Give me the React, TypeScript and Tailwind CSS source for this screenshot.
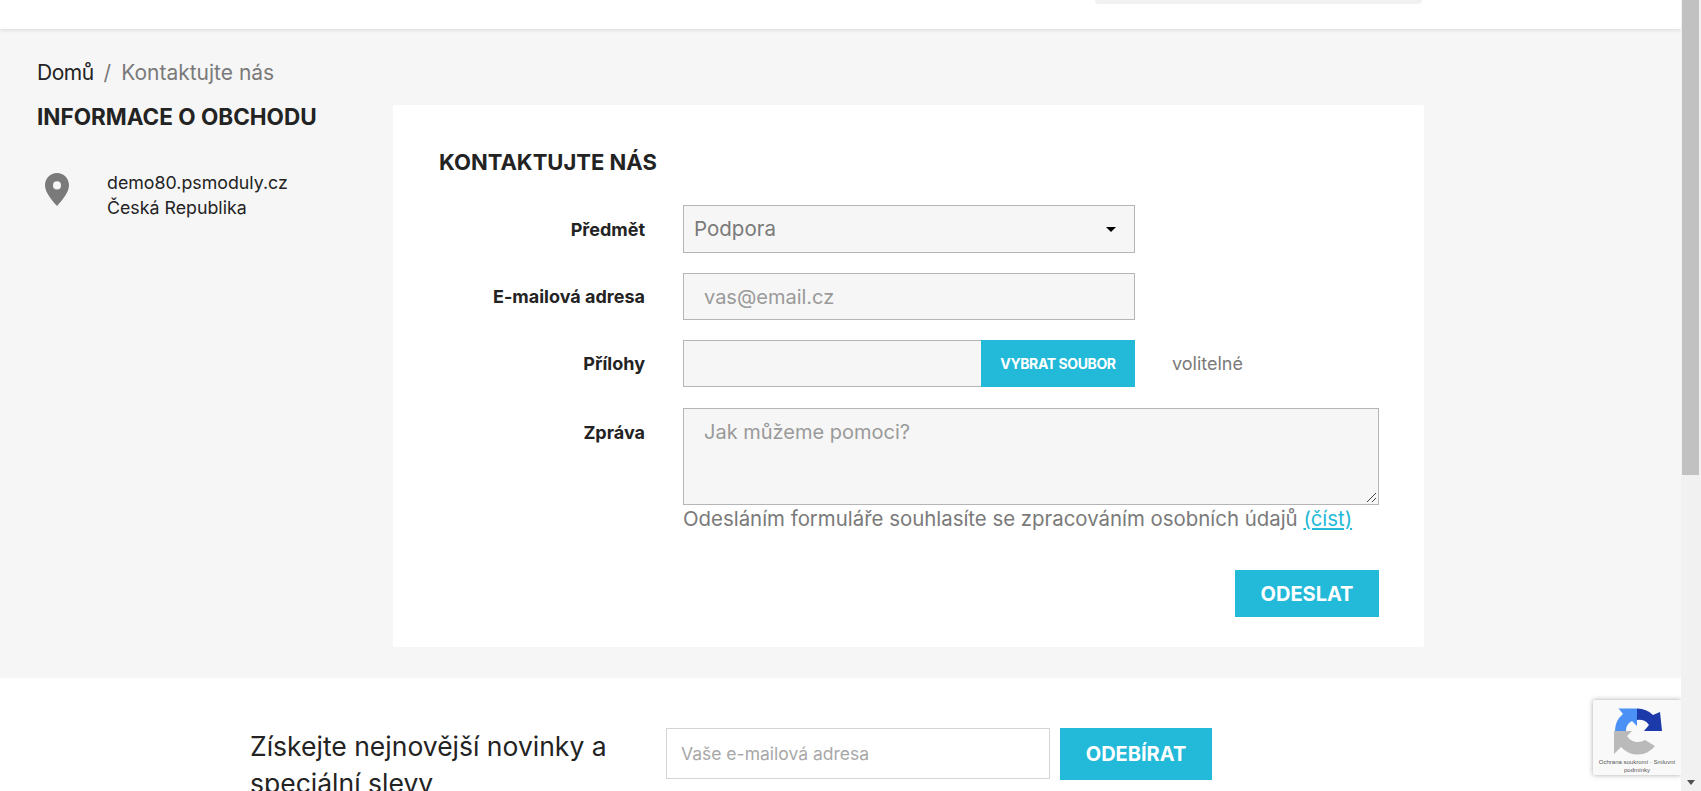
const sans = "font-['Inter',sans-serif]";

function Pin() {
  return (
    <svg width="24" height="33" viewBox="0 0 24 32" preserveAspectRatio="none" className="block">
      <path
        fillRule="evenodd"
        d="M12 0C5.4 0 0 5.200 0 11.800 0 19 7.600 27 12 32c4.400-5 12-13 12-20.200C24 5.200 18.600 0 12 0zm0 8a4 4 0 1 1 0 8 4 4 0 0 1 0-8z"
        fill="#7a7a7a"
      />
    </svg>
  );
}

function Recaptcha() {
  return (
    <div className="absolute left-[1593px] top-[700px] h-[75px] w-[88px] rounded-l-[2px] bg-[#f9f9f9] shadow-[0_0_5px_rgba(0,0,0,0.35)]">
      <svg width="50" height="48" viewBox="0 0 50 48" className="absolute left-[20px] top-[7px]">
        <path d="M2 24 A22 22 0 0 1 10 7 L5.500 1.500 L24 1.500 L24 19 L19 14 A11 11 0 0 0 13 24 Z" fill="#4a90f5" />
        <path d="M24 1.500 A22 22 0 0 1 40 8 L47 5 L49 24 L31 24 L36 18 A11 11 0 0 0 24 13 Z" fill="#1c3aa9" />
        <path d="M1 24 L19 24 L14 29 A13 13 0 0 0 32 33 L42 39 A22 22 0 0 1 8 40 L1 47 Z" fill="#bababa" />
      </svg>
      <div className="absolute left-0 right-0 top-[58px] text-center font-['Liberation_Sans',sans-serif] text-[6px] leading-[8px] text-[#555]">
        Ochrana soukromí · Smluvní podmínky
      </div>
    </div>
  );
}

function Scrollbar() {
  return (
    <div className="relative z-20 flex w-5 shrink-0 flex-col bg-[#f1f1f1]">
      <div className="h-[475px] w-full bg-[#c1c1c1] bg-clip-content pl-[1px] pr-[2px]" />
      <div className="mt-auto flex h-[17px] items-center justify-center">
        <div className="h-0 w-0 border-x-[4px] border-t-[5px] border-x-transparent border-t-[#505050]" />
      </div>
    </div>
  );
}

function Label({ children }: { children: React.ReactNode }) {
  return (
    <div className="w-[206px] shrink-0 text-right text-[18px] font-bold text-[#232323]">{children}</div>
  );
}

export default function App() {
  return (
    <div className={`${sans} relative flex h-[791px] w-full overflow-hidden bg-white`}>
      <div className="flex h-full min-w-0 flex-1 flex-col overflow-hidden">
        <header className="relative z-10 h-[29px] shrink-0 bg-white pl-[1095px] shadow-[0_1px_4px_rgba(0,0,0,0.12)]">
          <div className="h-[4px] w-[327px] rounded-b-[6px] bg-[#f1f1f1]" />
        </header>

        <main className="flex h-[649px] shrink-0 flex-col bg-[#f6f6f6] pl-[37px]">
          <nav className="mt-[32px] flex h-[24px] items-center text-[21px] leading-[24px]">
            <span className="tracking-[-0.5px] text-[#232323]">Domů</span>
            <span className="mx-[10px] text-[#7a7a7a]">/</span>
            <span className="text-[#7a7a7a]">Kontaktujte nás</span>
          </nav>
          <div className="flex">
            <aside className="mt-[19px] w-[356px] shrink-0">
              <h2 className="text-[22.500px] font-bold leading-[26px] text-[#232323]">INFORMACE O OBCHODU</h2>
              <div className="mt-[40px] flex">
                <div className="ml-[8px] mt-[3px] w-[24px] shrink-0">
                  <Pin />
                </div>
                <div className="ml-[38px] text-[17.800px] leading-[25px] text-[#232323]">
                  demo80.psmoduly.cz
                  <br />
                  Česká Republika
                </div>
              </div>
            </aside>
            <section className="mt-[20px] h-[542px] w-[1031px] shrink-0 rounded-[2px] bg-white pl-[46px] pt-[43px]">
              <h1 className="text-[22px] font-bold leading-[28px] text-[#232323]">KONTAKTUJTE NÁS</h1>
              <div className="mt-[29px] flex items-center">
                <Label>Předmět</Label>
                <div className="ml-[38px] flex h-[48px] w-[452px] items-center justify-between border border-[#b5b5b5] bg-[#f6f6f6] pl-[10px] pr-[18px] pt-[1px] text-[20.500px] text-[#7a7a7a]">
                  <span>Podpora</span>
                  <div className="h-0 w-0 border-x-[5px] border-t-[5px] border-x-transparent border-t-black" />
                </div>
              </div>
              <div className="mt-[20px] flex items-center">
                <Label>E-mailová adresa</Label>
                <div className="ml-[38px] flex h-[47px] w-[452px] items-center border border-[#b5b5b5] bg-[#f6f6f6] pl-[20px] text-[20px] text-[#9a9a9a]">
                  vas@email.cz
                </div>
              </div>
              <div className="mt-[20px] flex items-center">
                <Label>Přílohy</Label>
                <div className="ml-[38px] flex h-[47px] w-[452px]">
                  <div className="flex-1 border border-r-0 border-[#b5b5b5] bg-[#f6f6f6]" />
                  <div className="flex w-[154px] items-center justify-center bg-[#23b9d8] text-[14px] font-bold tracking-[-0.4px] text-white">
                    VYBRAT SOUBOR
                  </div>
                </div>
                <span className="ml-[37px] text-[18px] text-[#7a7a7a]">volitelné</span>
              </div>
              <div className="mt-[21px] flex items-start">
                <div className="mt-[11px]">
                  <Label>Zpráva</Label>
                </div>
                <div className="ml-[38px] w-[696px]">
                  <div className="relative h-[97px] border border-[#b5b5b5] bg-[#f6f6f6] pl-[20px] pt-[8px] text-[20px] text-[#9a9a9a]">
                    Jak můžeme pomoci?
                    <svg width="11" height="11" viewBox="0 0 11 11" className="absolute bottom-[1px] right-[1px]">
                      <path d="M1 10 L10 1 M6 10 L10 6" stroke="#444" strokeWidth="1" />
                    </svg>
                  </div>
                  <p className="mt-[2px] whitespace-nowrap text-[20.400px] leading-[24px] text-[#7a7a7a]">
                    Odesláním formuláře souhlasíte se zpracováním osobních údajů{" "}
                    <span className="text-[#23b9d8] underline">(číst)</span>
                  </p>
                  <div className="mt-[39px] flex justify-end">
                    <div className="flex h-[47px] w-[144px] items-center justify-center bg-[#23b9d8] text-[20px] font-bold text-white">
                      ODESLAT
                    </div>
                  </div>
                </div>
              </div>
            </section>
          </div>
        </main>

        <footer className="flex flex-1 items-start bg-white pl-[250px] pt-[50px]">
          <h3 className="w-[366px] shrink-0 text-[26.500px] font-normal leading-[37px] text-[#232323]">
            Získejte nejnovější novinky a speciální slevy
          </h3>
          <div className="ml-[50px] flex h-[51px] w-[384px] shrink-0 items-center border border-[#d5d5d5] bg-white pl-[14px] pt-[2px] text-[17.500px] text-[#a8a8a8]">
            Vaše e-mailová adresa
          </div>
          <div className="ml-[10px] flex h-[52px] w-[152px] shrink-0 items-center justify-center bg-[#23b9d8] text-[20px] font-bold text-white">
            ODEBÍRAT
          </div>
        </footer>
      </div>
      <Scrollbar />
      <Recaptcha />
    </div>
  );
}
